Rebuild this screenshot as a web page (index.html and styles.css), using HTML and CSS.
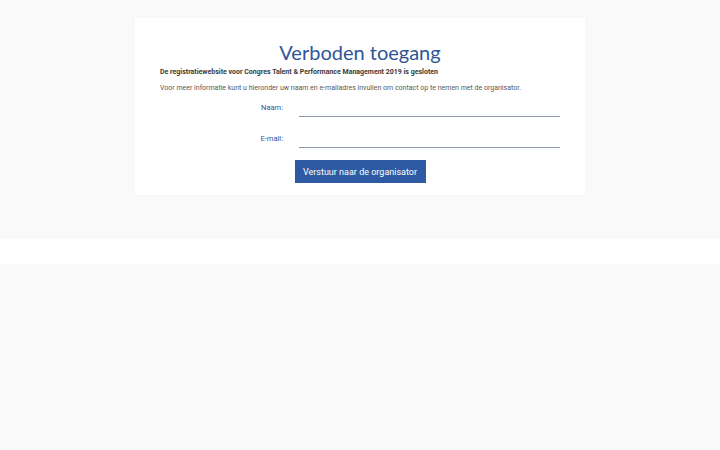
FILE: index.html
```html
<!DOCTYPE html>
<html lang="nl">
<head>
<meta charset="utf-8">
<title>Verboden toegang</title>
<link rel="stylesheet" href="styles.css">
</head>
<body>
<div class="top">
  <div class="card">
    <h1 class="title">Verboden toegang</h1>
    <p class="lead">De registratiewebsite voor Congres Talent &amp; Performance Management 2019 is gesloten</p>
    <p class="info">Voor meer informatie kunt u hieronder uw naam en e-mailadres invullen om contact op te nemen met de organisator.</p>
    <form class="form">
      <div class="row">
        <label class="label" for="naam">Naam:</label>
        <input class="input" id="naam" type="text">
      </div>
      <div class="row">
        <label class="label" for="email">E-mail:</label>
        <input class="input" id="email" type="email">
      </div>
      <div class="actions">
        <button class="button" type="button">Verstuur naar de organisator</button>
      </div>
    </form>
  </div>
</div>
<div class="band"></div>
<div class="bottom"></div>
</body>
</html>
```
FILE: styles.css
```css
html, body {
  margin: 0;
  padding: 0;
  background: #f9f9f9;
  font-family: Roboto, "Liberation Sans", sans-serif;
}
.top {
  height: 239px;
  padding-top: 18px;
  box-sizing: border-box;
}
.card {
  width: 450px;
  height: 177px;
  margin: 0 auto;
  background: #ffffff;
  box-sizing: border-box;
  padding: 21px 25px 0 25px;
  box-shadow: 0 0 3px rgba(0, 0, 0, 0.025);
}
.title {
  margin: 0;
  font-family: Lato, "Open Sans", sans-serif;
  font-weight: 400;
  font-size: 20px;
  line-height: 26px;
  color: #2f5597;
  text-align: center;
}
.lead {
  margin: 2px 0 0 0;
  font-size: 7px;
  line-height: 10px;
  font-weight: 700;
  color: #3a3a3a;
}
.info {
  margin: 6px 0 0 0;
  font-size: 7px;
  line-height: 10px;
  color: #5a5a5a;
}
.form {
  margin: 4px 0 0 0;
  display: flex;
  flex-direction: column;
  gap: 11px;
}
.row {
  display: grid;
  grid-template-columns: 123px 261px;
  column-gap: 16px;
  align-items: center;
  height: 20px;
}
.label {
  text-align: right;
  font-size: 7.5px;
  line-height: 10px;
  color: #2f5597;
  padding-top: 1px;
}
.input {
  box-sizing: border-box;
  height: 20px;
  width: 261px;
  margin: 0;
  padding: 0 2px;
  border: 0;
  border-bottom: 1px solid #8e9aab;
  background: transparent;
  outline: none;
  font-family: Roboto, "Liberation Sans", sans-serif;
  font-size: 9px;
}
.actions {
  display: flex;
  justify-content: center;
  margin-top: 1px;
}
.button {
  height: 23px;
  width: 131px;
  padding: 0;
  border: 0;
  background: #2e5aa3;
  color: #ffffff;
  font-family: Roboto, "Liberation Sans", sans-serif;
  font-size: 9px;
  cursor: pointer;
}
.band {
  height: 25px;
  background: #ffffff;
}
.bottom {
  height: 186px;
  background: #f9f9f9;
}
```
